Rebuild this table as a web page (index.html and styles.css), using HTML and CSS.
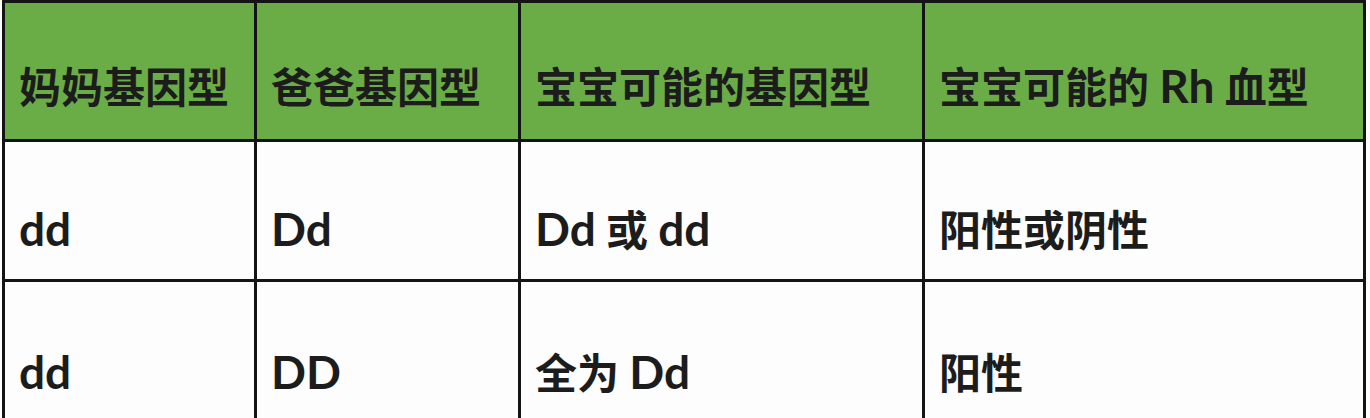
FILE: index.html
```html
<!DOCTYPE html>
<html lang="zh">
<head>
<meta charset="utf-8">
<link rel="stylesheet" href="styles.css">
</head>
<body>
<div class="table">
  <div class="cell head"><span class="txt">妈妈基因型</span></div>
  <div class="cell head"><span class="txt">爸爸基因型</span></div>
  <div class="cell head"><span class="txt">宝宝可能的基因型</span></div>
  <div class="cell head"><span class="txt">宝宝可能的 <span class="lat">Rh</span> 血型</span></div>

  <div class="cell"><span class="txt"><span class="lat">dd</span></span></div>
  <div class="cell"><span class="txt"><span class="lat">Dd</span></span></div>
  <div class="cell"><span class="txt"><span class="lat">Dd</span> 或 <span class="lat">dd</span></span></div>
  <div class="cell"><span class="txt">阳性或阴性</span></div>

  <div class="cell"><span class="txt"><span class="lat">dd</span></span></div>
  <div class="cell"><span class="txt"><span class="lat">DD</span></span></div>
  <div class="cell"><span class="txt">全为 <span class="lat">Dd</span></span></div>
  <div class="cell"><span class="txt">阳性</span></div>
</div>
</body>
</html>
```

FILE: styles.css
```css
html, body {
  margin: 0;
  padding: 0;
  background: #ffffff;
  overflow: hidden;
}

.table {
  margin-left: 2px;
  width: 1364px;
  display: grid;
  grid-template-columns: 249px 261px 401px 438px;
  grid-template-rows: 136px 137px 140px;
  gap: 3px;
  padding: 3px 3px 0 3px;
  box-sizing: border-box;
  background: #141414;
  font-family: "Lato", "Noto Sans CJK SC", sans-serif;
  font-weight: 700;
  font-size: 42px;
  line-height: 1;
  color: #1c1c1c;
}

.cell {
  background: #fdfdfd;
  padding: 0 0 28px 14px;
  white-space: nowrap;
  display: flex;
  align-items: flex-end;
}

.cell.head {
  background: #6aac46;
  padding-bottom: 31px;
}

.txt {
  display: block;
}

.lat {
  font-size: 46px;
  line-height: 42px;
}
```
